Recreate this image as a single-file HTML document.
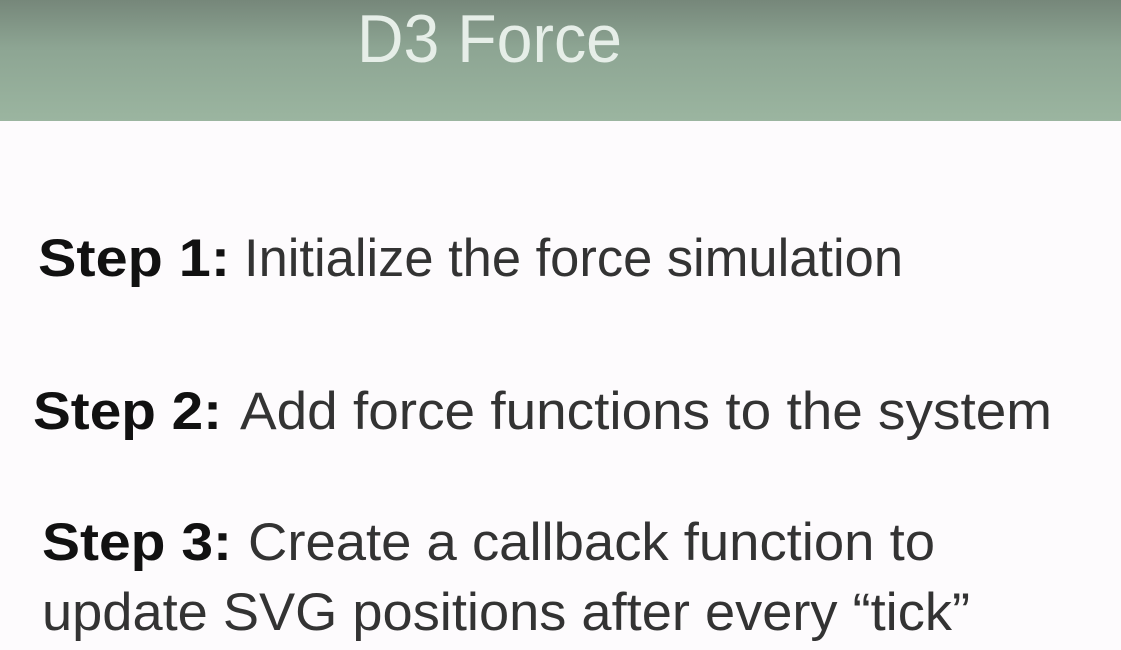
<!DOCTYPE html>
<html><head><meta charset="utf-8"><style>
html,body{margin:0;padding:0;width:1121px;height:650px;overflow:hidden;background:#fdfbfd;}
.hd{position:absolute;left:0;top:0;width:1121px;height:121px;background:linear-gradient(#76877a,#8da593 40%,#9bb5a0);}
svg{position:absolute;left:0;top:0;}
</style></head><body>
<div class="hd"></div>
<svg width="1121" height="650" font-family="Liberation Sans, sans-serif">
<text x="357" y="62" font-size="68" fill="#e6eee8" textLength="265" lengthAdjust="spacingAndGlyphs" font-weight="300">D3 Force</text>
<g font-size="53" fill="#111">
<text x="38" y="276" font-weight="bold" textLength="192" lengthAdjust="spacingAndGlyphs">Step 1:</text>
<text x="244" y="276" fill="#333" textLength="659" lengthAdjust="spacingAndGlyphs">Initialize the force simulation</text>
<text x="33" y="429" font-weight="bold" textLength="189" lengthAdjust="spacingAndGlyphs">Step 2:</text>
<text x="240" y="429" fill="#333" textLength="812" lengthAdjust="spacingAndGlyphs">Add force functions to the system</text>
<text x="42" y="560" font-weight="bold" textLength="190" lengthAdjust="spacingAndGlyphs">Step 3:</text>
<text x="248" y="560" fill="#333" textLength="687" lengthAdjust="spacingAndGlyphs">Create a callback function to</text>
<text x="42" y="630" fill="#333" textLength="928" lengthAdjust="spacingAndGlyphs">update SVG positions after every “tick”</text>
</g>
</svg>
</body></html>
